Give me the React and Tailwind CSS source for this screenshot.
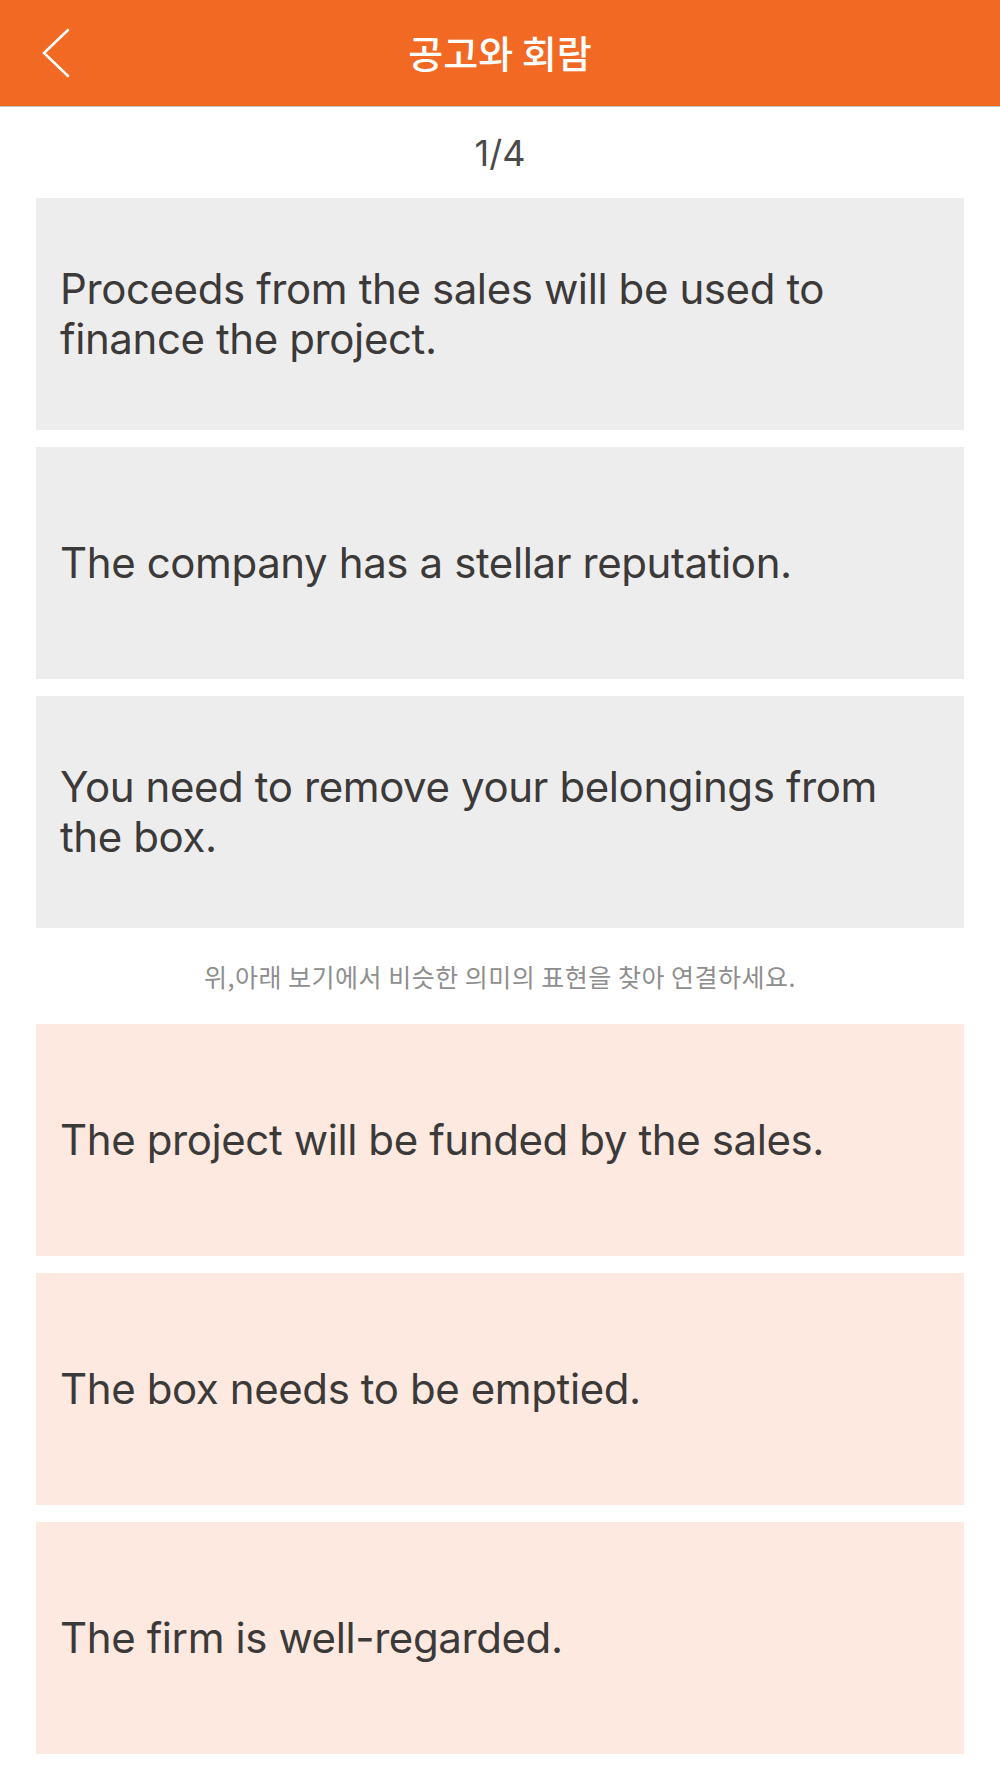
import React from "react";

const top = [
  "Proceeds from the sales will be used to finance the project.",
  "The company has a stellar reputation.",
  "You need to remove your belongings from the box.",
];
const bottom = [
  "The project will be funded by the sales.",
  "The box needs to be emptied.",
  "The firm is well-regarded.",
];

function Card({ text, pink }) {
  return (
    <div
      className={
        "h-[232px] flex items-center pl-6 pr-[64px] " +
        (pink ? "bg-[#fde9df]" : "bg-[#ededed]")
      }
    >
      <p className="text-[42px] leading-[50px] text-[#3c3939] font-['Inter','Noto_Sans_CJK_KR',sans-serif] tracking-[-0.4px]">
        {text}
      </p>
    </div>
  );
}

export default function App() {
  return (
    <div className="w-[1000px] min-h-[1778px] bg-white">
      <header className="h-[107px] bg-[#f26924] border-b border-[#c4c4c4] grid grid-cols-[1fr_auto_1fr] items-center">
        <div className="pl-[42px] flex items-center">
          <svg width="30" height="50" viewBox="0 0 30 50" fill="none">
            <polyline
              points="26,2 2,25 26,48"
              stroke="white"
              strokeWidth="2.5"
              strokeLinecap="round"
              strokeLinejoin="miter"
            />
          </svg>
        </div>
        <h1 className="text-white text-[38px] font-medium leading-none font-['Noto_Sans_CJK_KR',sans-serif] pb-[2px]">
          공고와 회람
        </h1>
        <div />
      </header>
      <div className="h-[91px] flex items-center justify-center">
        <span className="text-[36px] leading-none text-[#4a4a4a] font-['Inter',sans-serif]">
          1/4
        </span>
      </div>
      <div className="px-9 flex flex-col gap-[17px]">
        {top.map((t) => (
          <Card key={t} text={t} />
        ))}
      </div>
      <div className="h-[96px] flex items-center justify-center">
        <span className="text-[25px] leading-none tracking-[0.5px] text-[#8e8e8e] font-['Noto_Sans_CJK_KR',sans-serif]">
          위,아래 보기에서 비슷한 의미의 표현을 찾아 연결하세요.
        </span>
      </div>
      <div className="px-9 flex flex-col gap-[17px] pb-[25px]">
        {bottom.map((t) => (
          <Card key={t} text={t} pink />
        ))}
      </div>
    </div>
  );
}
